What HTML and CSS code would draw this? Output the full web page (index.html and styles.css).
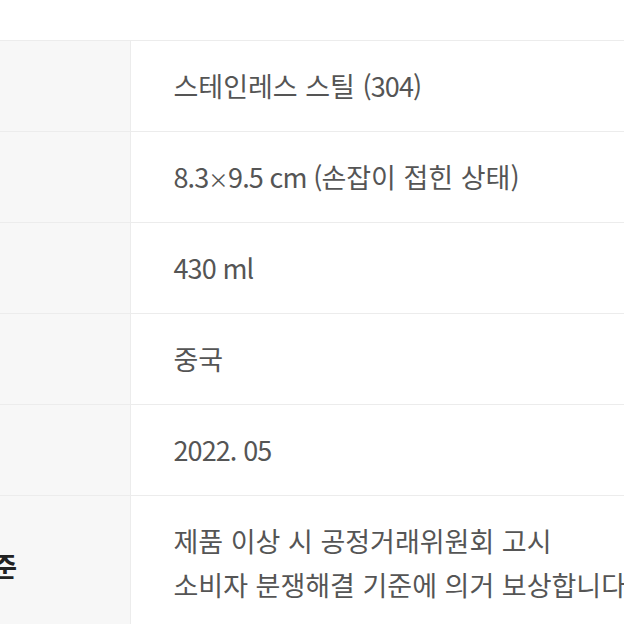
FILE: index.html
```html
<!DOCTYPE html>
<html lang="ko">
<head>
<meta charset="utf-8">
<link rel="stylesheet" href="styles.css">
</head>
<body>
<div class="page">
  <table class="spec">
    <colgroup><col class="c-label"><col class="c-value"></colgroup>
    <tr><th>재질</th><td>스테인레스 스틸 <span class="lat">(304)</span></td></tr>
    <tr><th>크기</th><td><span class="lat">8.3<span class="x">×</span>9.5 cm (</span>손잡이 접힌 상태<span class="lat">)</span></td></tr>
    <tr><th>용량</th><td><span class="lat">430 ml</span></td></tr>
    <tr><th>제조국</th><td>중국</td></tr>
    <tr><th>제조년월</th><td><span class="lat">2022. 05</span></td></tr>
    <tr><th>품질보증기준</th><td>제품 이상 시 공정거래위원회 고시<br>소비자 분쟁해결 기준에 의거 보상합니다.</td></tr>
  </table>
</div>
</body>
</html>
```
FILE: styles.css
```css
html, body {
  margin: 0;
  padding: 0;
  overflow: hidden;
  background: #fff;
}
.page {
  padding-top: 40px;
  margin-left: -300px;
  width: 1400px;
  font-family: "Noto Sans CJK KR", "Noto Sans", sans-serif;
}
.spec {
  border-collapse: collapse;
  table-layout: fixed;
  width: 1200px;
  border-top: 1px solid #ececec;
}
.c-label { width: 430px; }
.c-value { width: 770px; }
.spec tr {
  border-bottom: 1px solid #ececec;
}
.spec th {
  background: #f7f7f7;
  border-right: 1px solid #ececec;
  text-align: left;
  padding: 4px 0 0 168px;
  font-size: 27px;
  font-weight: 700;
  color: #222;
  white-space: nowrap;
  overflow: hidden;
}
.spec td {
  padding: 23px 20px 23px 43px;
  font-size: 27px;
  line-height: 44px;
  color: #555;
  white-space: nowrap;
}
.lat {
  letter-spacing: -0.9px;
}
.x {
  font-size: 0.75em;
  line-height: 1;
  letter-spacing: -0.5px;
}
```
